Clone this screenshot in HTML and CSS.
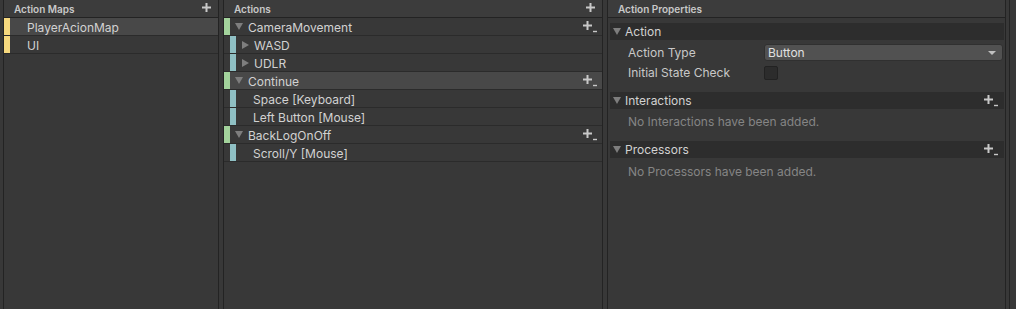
FILE: index.html
```html
<!DOCTYPE html>
<html>
<head>
<meta charset="utf-8">
<link rel="stylesheet" href="styles.css">
</head>
<body>
<div class="window">
  <section class="panel maps">
    <header class="phead"><span>Action Maps</span>
      <svg class="plus" width="9" height="9" viewBox="0 0 9 9"><path d="M4.5 0v9M0 4.5h9" stroke="#c8c8c8" stroke-width="2"/></svg>
    </header>
    <div class="row sel"><i class="bar yellow"></i><span class="txt map">PlayerAcionMap</span></div>
    <div class="row"><i class="bar yellow"></i><span class="txt map">UI</span></div>
  </section>
  <section class="panel actions">
    <header class="phead"><span>Actions</span>
      <svg class="plus" width="9" height="9" viewBox="0 0 9 9"><path d="M4.5 0v9M0 4.5h9" stroke="#c8c8c8" stroke-width="2"/></svg>
    </header>
    <div class="row"><i class="bar green"></i><i class="tri down"></i><span class="txt">CameraMovement</span>
      <svg class="plusdd" width="14" height="12" viewBox="0 0 14 12"><path d="M4.5 0v9M0 4.5h9" stroke="#c8c8c8" stroke-width="2"/><path d="M10 10.5h4" stroke="#c8c8c8" stroke-width="1.4"/></svg></div>
    <div class="row"><i class="bar blue ind"></i><i class="tri right"></i><span class="txt">WASD</span></div>
    <div class="row"><i class="bar blue ind"></i><i class="tri right"></i><span class="txt">UDLR</span></div>
    <div class="row sel"><i class="bar green"></i><i class="tri down"></i><span class="txt">Continue</span>
      <svg class="plusdd" width="14" height="12" viewBox="0 0 14 12"><path d="M4.5 0v9M0 4.5h9" stroke="#c8c8c8" stroke-width="2"/><path d="M10 10.5h4" stroke="#c8c8c8" stroke-width="1.4"/></svg></div>
    <div class="row"><i class="bar blue ind"></i><span class="txt bind">Space [Keyboard]</span></div>
    <div class="row"><i class="bar blue ind"></i><span class="txt bind">Left Button [Mouse]</span></div>
    <div class="row"><i class="bar green"></i><i class="tri down"></i><span class="txt">BackLogOnOff</span>
      <svg class="plusdd" width="14" height="12" viewBox="0 0 14 12"><path d="M4.5 0v9M0 4.5h9" stroke="#c8c8c8" stroke-width="2"/><path d="M10 10.5h4" stroke="#c8c8c8" stroke-width="1.4"/></svg></div>
    <div class="row"><i class="bar blue ind"></i><span class="txt bind">Scroll/Y [Mouse]</span></div>
  </section>
  <section class="panel props">
    <header class="phead"><span>Action Properties</span></header>
    <div class="body">
      <div class="fold"><i class="tri down"></i><span>Action</span></div>
      <div class="field"><label>Action Type</label>
        <div class="dropdown"><span>Button</span><i class="tri down small"></i></div>
      </div>
      <div class="field f2"><label>Initial State Check</label><div class="check"></div></div>
      <div class="fold sp"><i class="tri down"></i><span>Interactions</span>
        <svg class="plusdd" width="14" height="12" viewBox="0 0 14 12"><path d="M4.5 0v9M0 4.5h9" stroke="#c8c8c8" stroke-width="2"/><path d="M10 10.5h4" stroke="#c8c8c8" stroke-width="1.4"/></svg></div>
      <div class="empty">No Interactions have been added.</div>
      <div class="fold sp2"><i class="tri down"></i><span>Processors</span>
        <svg class="plusdd" width="14" height="12" viewBox="0 0 14 12"><path d="M4.5 0v9M0 4.5h9" stroke="#c8c8c8" stroke-width="2"/><path d="M10 10.5h4" stroke="#c8c8c8" stroke-width="1.4"/></svg></div>
      <div class="empty e2">No Processors have been added.</div>
    </div>
  </section>
  <div class="edge"></div>
</div>
</body>
</html>
```

FILE: styles.css
```css
html, body {
  margin: 0;
  padding: 0;
  background: #383838;
  font-family: Inter, "Noto Sans", sans-serif;
  color: #d2d2d2;
}
.window {
  display: flex;
  height: 309px;
  padding-left: 3px;
  gap: 4px;
}
.panel {
  border-left: 1px solid #232323;
  border-right: 1px solid #232323;
  background: #383838;
  display: flex;
  flex-direction: column;
}
.maps { width: 214px; }
.actions { width: 378px; }
.props { width: 397px; }
.edge {
  width: 0;
  border-left: 1px solid #232323;
  margin-left: -1px;
}
.phead {
  height: 17px;
  border-bottom: 1px solid #232323;
  background: #3c3c3c;
  display: flex;
  align-items: center;
  justify-content: space-between;
  padding: 0 7px 0 10px;
  font-size: 10px;
  font-weight: 600;
  color: #c8c8c8;
}
.plus { margin-top: -3px; }
.row {
  height: 17px;
  border-bottom: 1px solid #2b2b2b;
  display: flex;
  align-items: center;
  background: #383838;
  font-size: 12px;
}
.row.sel { background: #484848; }
.bar {
  width: 6px;
  height: 17px;
  flex: none;
}
.yellow { background: #f7d97e; }
.green { background: #a3d39c; }
.blue { background: #8fc0c4; }
.bar.ind { margin-left: 6px; }
.txt { color: #d2d2d2; padding-top: 2px; }
.txt.map { margin-left: 17px; }
.txt.bind { margin-left: 17px; }
.tri {
  width: 0;
  height: 0;
  flex: none;
}
.tri.down {
  border-left: 4px solid transparent;
  border-right: 4px solid transparent;
  border-top: 7px solid #7e7e7e;
  margin-left: 5px;
  margin-right: 5px;
}
.tri.right {
  border-top: 4px solid transparent;
  border-bottom: 4px solid transparent;
  border-left: 7px solid #7e7e7e;
  margin-left: 6px;
  margin-right: 5px;
}
.plusdd {
  margin-left: auto;
  margin-right: 5px;
}
.props .phead { padding-left: 10px; }
.body { padding: 5px 0 0 2px; }
.fold {
  height: 17px;
  background: #2d2d2d;
  display: flex;
  align-items: center;
  font-size: 12px;
  color: #d2d2d2;
  width: 394px;
}
.fold .tri.down { margin-left: 3px; margin-right: 4px; }
.fold .plusdd { margin-right: 6px; }
.fold.sp { margin-top: 11px; }
.fold.sp2 { margin-top: 12px; }
.field {
  height: 17px;
  margin-top: 4px;
  display: flex;
  align-items: center;
  font-size: 12px;
}
.field.f2 { margin-top: 3px; }
.field label {
  width: 136px;
  padding-left: 18px;
  color: #c8c8c8;
}
.dropdown {
  width: 234px;
  height: 15px;
  background: #515151;
  border: 1px solid #303030;
  border-radius: 3px;
  display: flex;
  align-items: center;
  padding-left: 3px;
  color: #e0e0e0;
}
.dropdown .tri.small {
  border-left-width: 4px;
  border-right-width: 4px;
  border-top: 4px solid #c0c0c0;
  margin-left: auto;
  margin-right: 6px;
}
.check {
  width: 12px;
  height: 12px;
  background: #2c2c2c;
  border: 1px solid #222;
  border-radius: 2px;
}
.empty {
  font-size: 12px;
  color: #858585;
  padding-left: 18px;
  margin-top: 5px;
  height: 15px;
}
.empty.e2 { margin-top: 6px; }
```
